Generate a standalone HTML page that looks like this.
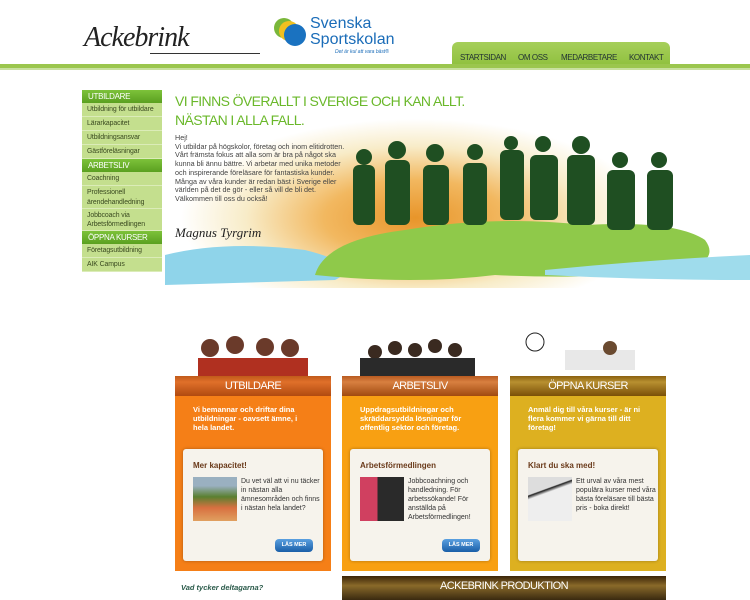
<!DOCTYPE html>
<html><head><meta charset="utf-8"><style>
*{margin:0;padding:0;box-sizing:border-box}
body{width:750px;height:600px;overflow:hidden;background:#fff;font-family:"Liberation Sans",sans-serif;position:relative}
.abs{position:absolute}
.nav{left:452px;top:42px;width:218px;height:26px;background:linear-gradient(#a6cf5a,#8dbf3c);border-radius:6px 6px 0 0}
.nav span{position:absolute;top:11px;font-size:8px;color:#233;letter-spacing:-.4px}
.bar{left:0;top:64px;width:750px;height:6px;background:#9bc64e;border-bottom:2px solid #c8e0a0}
.side{left:82px;top:90px;width:80px;background:#c4df8e;font-size:6.9px;color:#3a4a20}
.side .h{background:linear-gradient(#7dc23a,#5aa020);color:#fff;height:13px;line-height:13px;padding-left:6px;font-size:8px;letter-spacing:-.3px}
.side .i{padding:2px 5px;border-bottom:1px solid #dbecb8;line-height:9.5px;height:14px;white-space:nowrap;letter-spacing:-.1px}
.side .i2{height:22.5px;white-space:normal}
.box{top:376px;width:156px;height:195px}
.box .t{height:20px;background:linear-gradient(#c05a1a,#e0702a 30%,#b04a10);color:#fff;text-align:center;font-size:11px;line-height:20px;letter-spacing:-.6px}
.box .d{color:#fff;font-weight:bold;font-size:7.5px;line-height:9px;padding:9px 18px 0 18px}
.paper{position:absolute;left:8px;top:73px;width:140px;height:112px;background:#f6f3ec;border-radius:3px;box-shadow:0 0 3px rgba(0,0,0,.3)}
.paper h4{font-size:8px;color:#6a3a1a;padding:12px 0 0 10px}
.paper .img{position:absolute;left:10px;top:28px;width:44px;height:44px}
.paper p{position:absolute;left:58px;top:28px;width:80px;font-size:7px;line-height:9px;color:#333}
.btn{position:absolute;right:10px;bottom:9px;width:38px;height:13px;border-radius:4px;background:linear-gradient(#5aa0e0,#1a5fa8);color:#fff;font-size:5.5px;font-weight:bold;text-align:center;line-height:13px}
.fig{fill:#1f4f22}
</style></head><body>
<div class="abs" style="left:84px;top:22px;font-family:'Liberation Serif',serif;font-style:italic;font-size:28px;color:#222;letter-spacing:-1px">Ackebrink</div>
<div class="abs" style="left:150px;top:53px;width:110px;height:1px;background:#333"></div>
<svg class="abs" style="left:273px;top:15px" width="40" height="35"><circle cx="11" cy="13" r="10" fill="#7ab73a"/><circle cx="16" cy="16" r="10" fill="#f0c020"/><circle cx="22" cy="20" r="11" fill="#1a72c0"/></svg>
<div class="abs" style="left:310px;top:16px;font-size:16px;color:#1a6cb8;line-height:16px">Svenska<br>Sportskolan</div>
<div class="abs" style="left:335px;top:49px;font-size:5px;color:#1a6cb8;font-style:italic">Det är kul att vara bäst®</div>
<div class="abs nav"><span style="left:8px">STARTSIDAN</span><span style="left:66px">OM OSS</span><span style="left:109px">MEDARBETARE</span><span style="left:177px">KONTAKT</span></div>
<div class="abs bar"></div>
<div class="abs" style="left:165px;top:78px;width:585px;height:210px;background:radial-gradient(ellipse 260px 110px at 250px 140px,#e8952a,#f2b860 35%,#f8ecc8 65%,#fff 90%)"></div>
<svg class="abs" style="left:165px;top:180px" width="585" height="110"><path d="M0 75 Q60 60 140 70 Q200 85 170 100 L0 105Z" fill="#8fd4ea"/><path d="M150 95 Q160 60 240 50 Q330 35 420 45 Q510 40 540 60 Q555 80 520 90 Q430 100 330 95 Q250 105 150 95Z" fill="#8fc94a"/><path d="M380 90 Q480 80 585 75 L585 100 Q480 100 380 95Z" fill="#9fdcec"/></svg>
<svg class="abs" style="left:345px;top:135px" width="340" height="145">
<g class="fig"><rect x="8" y="30" width="22" height="60" rx="6"/><circle cx="19" cy="22" r="8"/><rect x="40" y="25" width="25" height="65" rx="6"/><circle cx="52" cy="15" r="9"/><rect x="78" y="30" width="26" height="60" rx="6"/><circle cx="90" cy="18" r="9"/><rect x="118" y="28" width="24" height="62" rx="6"/><circle cx="130" cy="17" r="8"/><rect x="155" y="15" width="24" height="70" rx="6"/><circle cx="166" cy="8" r="7"/><rect x="185" y="20" width="28" height="65" rx="6"/><circle cx="198" cy="9" r="8"/><rect x="222" y="20" width="28" height="70" rx="6"/><circle cx="236" cy="10" r="9"/><rect x="262" y="35" width="28" height="60" rx="6"/><circle cx="275" cy="25" r="8"/><rect x="302" y="35" width="26" height="60" rx="6"/><circle cx="314" cy="25" r="8"/></g></svg>
<div class="abs" style="left:175px;top:92px;font-size:14px;color:#6ab82a;line-height:19px;letter-spacing:-.6px">VI FINNS ÖVERALLT I SVERIGE OCH KAN ALLT.<br>NÄSTAN I ALLA FALL.</div>
<div class="abs" style="left:175px;top:134px;width:172px;font-size:7.2px;line-height:8.7px;color:#444">Hej!<br>Vi utbildar på högskolor, företag och inom elitidrotten. Vårt främsta fokus att alla som är bra på något ska kunna bli ännu bättre. Vi arbetar med unika metoder och inspirerande föreläsare för fantastiska kunder. Många av våra kunder är redan bäst i Sverige eller världen på det de gör - eller så vill de bli det. Välkommen till oss du också!</div>
<div class="abs" style="left:175px;top:225px;font-family:'Liberation Serif',serif;font-style:italic;font-size:13px;color:#222">Magnus Tyrgrim</div>
<div class="abs side">
<div class="h">UTBILDARE</div><div class="i">Utbildning för utbildare</div><div class="i">Lärarkapacitet</div><div class="i">Utbildningsansvar</div><div class="i">Gästföreläsningar</div>
<div class="h">ARBETSLIV</div><div class="i">Coachning</div><div class="i i2">Professionell ärendehandledning</div><div class="i i2">Jobbcoach via Arbetsförmedlingen</div>
<div class="h">ÖPPNA KURSER</div><div class="i">Företagsutbildning</div><div class="i">AIK Campus</div></div>
<svg class="abs" style="left:190px;top:330px" width="480" height="48"><g fill="#6a3a2a"><circle cx="20" cy="18" r="9"/><circle cx="45" cy="15" r="9"/><circle cx="75" cy="17" r="9"/><circle cx="100" cy="18" r="9"/></g><rect x="8" y="28" width="110" height="20" fill="#b03020"/><g fill="#3a2a20"><circle cx="185" cy="22" r="7"/><circle cx="205" cy="18" r="7"/><circle cx="225" cy="20" r="7"/><circle cx="245" cy="16" r="7"/><circle cx="265" cy="20" r="7"/></g><rect x="170" y="28" width="115" height="20" fill="#2a2a2a"/><circle cx="345" cy="12" r="9" fill="#fff" stroke="#222"/><rect x="375" y="20" width="70" height="20" fill="#e8e8e8"/><circle cx="420" cy="18" r="7" fill="#6a4a30"/></svg>
<div class="abs box" style="left:175px;background:#f57f17"><div class="t">UTBILDARE</div><div class="d">Vi bemannar och driftar dina utbildningar - oavsett ämne, i hela landet.</div><div class="paper"><h4>Mer kapacitet!</h4><div class="img" style="background:linear-gradient(#9ab0c0 20%,#5a8030 45%,#d87040 70%,#e0a060)"></div><p>Du vet väl att vi nu täcker in nästan alla ämnesområden och finns i nästan hela landet?</p><div class="btn">LÄS MER</div></div></div>
<div class="abs box" style="left:342px;background:#f8a012"><div class="t" style="background:linear-gradient(#b85a20,#d88040 30%,#a04a10)">ARBETSLIV</div><div class="d">Uppdragsutbildningar och skräddarsydda lösningar för offentlig sektor och företag.</div><div class="paper"><h4>Arbetsförmedlingen</h4><div class="img" style="background:linear-gradient(90deg,#d04060 40%,#2a2a2a 40%)"></div><p>Jobbcoachning och handledning. För arbetssökande! För anställda på Arbetsförmedlingen!</p><div class="btn">LÄS MER</div></div></div>
<div class="abs box" style="left:510px;background:#ddb020"><div class="t" style="background:linear-gradient(#8a6010,#b89030 30%,#7a5008)">ÖPPNA KURSER</div><div class="d">Anmäl dig till våra kurser - är ni flera kommer vi gärna till ditt företag!</div><div class="paper"><h4>Klart du ska med!</h4><div class="img" style="background:linear-gradient(160deg,#ddd 30%,#222 32%,#eee 38%)"></div><p>Ett urval av våra mest populära kurser med våra bästa föreläsare till bästa pris - boka direkt!</p></div></div>
<div class="abs" style="left:181px;top:583px;font-size:7.5px;font-weight:bold;font-style:italic;color:#2a5a4a">Vad tycker deltagarna?</div>
<div class="abs" style="left:342px;top:576px;width:324px;height:24px;background:linear-gradient(#3a2408,#8a6a2a 40%,#3a2a10);color:#fff;text-align:center;font-size:11px;line-height:20px;letter-spacing:-.6px">ACKEBRINK PRODUKTION</div>
</body></html>
